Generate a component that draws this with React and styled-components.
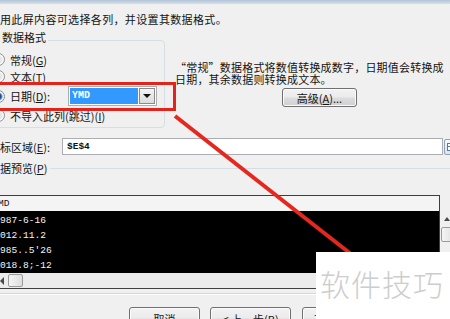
import React from "react";
import styled, { createGlobalStyle } from "styled-components";

const GlobalStyle = createGlobalStyle`
  html, body {
    margin: 0;
    padding: 0;
    background: #f0f0f0;
  }
  body {
    width: 450px;
    height: 319px;
    overflow: hidden;
    font-family: "Noto Sans CJK SC", "Noto Sans", sans-serif;
    font-size: 11px;
    color: #141414;
  }
  u { text-decoration-thickness: 1px; text-underline-offset: 1px; }
`;

const Frame = styled.div`
  position: relative;
  width: 450px;
  height: 319px;
  overflow: hidden;
  background: #f0f0f0;
  display: flex;
  flex-direction: column;
`;

const TitleEdge = styled.div`
  flex: none;
  height: 4px;
  background: linear-gradient(#b2c4d8, #d6e1ec);
`;

const Intro = styled.div`
  padding-top: 8px;
  line-height: 14px;
  white-space: nowrap;
  letter-spacing: 0.35px;
`;

const FormatArea = styled.div`
  display: flex;
  flex: none;
  height: 88px;
  margin-top: 14px;
`;

const GroupBox = styled.div`
  flex: none;
  width: 175px;
  margin-left: -10px;
  box-sizing: border-box;
  border: 1px solid #d5dfe5;
  border-radius: 4px;
`;

const GroupTitle = styled.div`
  width: fit-content;
  margin: -10px 0 0 9px;
  padding: 0 2px;
  line-height: 12px;
  background: #f0f0f0;
`;

const RadioList = styled.div`
  margin-top: 8px;
  display: flex;
  flex-direction: column;
`;

const RadioRow = styled.div`
  display: flex;
  align-items: center;
  height: ${(p) => p.$h || 17}px;
  white-space: nowrap;
`;

const RadioDot = styled.span`
  flex: none;
  width: 13px;
  height: 13px;
  margin: 0 5px 0 1px;
  box-sizing: border-box;
  border-radius: 50%;
  border: 1px solid #8e8f8f;
  background: ${(p) =>
    p.$on
      ? "radial-gradient(circle, #1b4f8a 0 2.5px, #5f9ad6 3.5px, #eaf2fb 4.5px)"
      : "radial-gradient(circle, #e6e6e6 0 3px, #fafafa 5px)"};
`;

const DateLabel = styled.span`
  width: 58px;
  flex: none;
`;

const Combo = styled.div`
  display: flex;
  width: 89px;
  height: 20px;
  box-sizing: border-box;
  border: 1px solid #abadb3;
  background: #fff;
  padding: 1px;
  gap: 1px;
`;

const ComboValue = styled.div`
  flex: 1;
  background: #3399ff;
  color: #fff;
  font-family: "Liberation Mono", monospace;
  font-size: 10px;
  font-weight: bold;
  line-height: 16px;
  padding-left: 2px;
`;

const ComboButton = styled.div`
  flex: none;
  width: 16px;
  box-sizing: border-box;
  border: 1px solid #8a8a8a;
  background: linear-gradient(#f4f4f4, #dcdcdc);
  display: flex;
  align-items: center;
  justify-content: center;
  &::after {
    content: "";
    border-top: 4px solid #111;
    border-left: 4px solid transparent;
    border-right: 4px solid transparent;
  }
`;

const Side = styled.div`
  flex: 1;
  min-width: 0;
  padding-left: 10px;
  padding-top: 22px;
  display: flex;
  flex-direction: column;
`;

const DescLine = styled.div`
  line-height: 11.5px;
  white-space: nowrap;
  letter-spacing: 0.2px;
`;

const WinButton = styled.div`
  flex: none;
  width: ${(p) => p.$w}px;
  height: ${(p) => p.$h || 23}px;
  margin-left: ${(p) => p.$ml || 0}px;
  box-sizing: border-box;
  border: 1px solid #707070;
  border-radius: 3px;
  background: linear-gradient(#f2f2f2 0%, #ebebeb 48%, #dddddd 52%, #cfcfcf 100%);
  box-shadow: inset 0 0 0 1px #fbfbfb;
  display: flex;
  align-items: center;
  justify-content: center;
  white-space: nowrap;
  line-height: 14px;
`;

const AdvRow = styled.div`
  display: flex;
  margin-top: 3px;
`;

const TargetRow = styled.div`
  display: flex;
  align-items: center;
  height: 17px;
  margin-top: 10px;
  white-space: nowrap;
`;

const TargetLabel = styled.span`
  width: 62px;
  flex: none;
`;

const TextField = styled.div`
  flex: none;
  width: 381px;
  height: 17px;
  box-sizing: border-box;
  border: 1px solid #abadb3;
  background: #fff;
  padding-left: 4px;
  font-family: "Liberation Mono", monospace;
  font-size: 9.5px;
  font-weight: bold;
  line-height: 15px;
`;

const RefButton = styled.div`
  flex: none;
  width: 16px;
  height: 16px;
  margin-left: 1px;
  box-sizing: border-box;
  border: 1px solid #8fa2b8;
  border-radius: 2px;
  background: linear-gradient(#f6f8fb, #dde4ec);
  display: flex;
  align-items: center;
  padding-left: 2px;
`;

const PreviewHead = styled.div`
  display: flex;
  align-items: center;
  line-height: 14px;
  margin-top: 6px;
  white-space: nowrap;
`;

const HeadRule = styled.div`
  flex: 1;
  margin-left: 3px;
  border-top: 1px solid #d5dfe5;
`;

const Preview = styled.div`
  display: flex;
  align-items: flex-start;
  margin-top: 20px;
`;

const PreviewMain = styled.div`
  flex: none;
  width: 442px;
  margin-left: -2px;
  box-sizing: border-box;
  border: 1px solid #3f3f3f;
  font-family: "Liberation Mono", monospace;
  font-size: 9.6px;
`;

const ColHeader = styled.div`
  height: 15px;
  line-height: 15px;
  background: #f4f4f4;
  padding-left: 1px;
  text-indent: -2px;
  color: #111;
`;

const DataArea = styled.div`
  height: 62px;
  overflow: hidden;
  background: #000;
  color: #f4f4f4;
  padding: 2px 0 0 1px;
  box-sizing: border-box;
`;

const DataRow = styled.div`
  height: 15px;
  line-height: 15px;
  white-space: pre;
`;

const HScroll = styled.div`
  height: 15px;
  display: flex;
  align-items: center;
  background: #ececec;
`;

const ArrowLeft = styled.span`
  flex: none;
  margin-left: 1px;
  border-right: 4px solid #4a4a4a;
  border-top: 4px solid transparent;
  border-bottom: 4px solid transparent;
`;

const Thumb = styled.span`
  flex: none;
  width: ${(p) => p.$w}px;
  height: ${(p) => p.$h}px;
  margin-left: ${(p) => p.$ml || 0}px;
  margin-top: ${(p) => p.$mt || 0}px;
  box-sizing: border-box;
  border: 1px solid #9b9b9b;
  border-radius: 2px;
  background: linear-gradient(90deg, #f4f4f4, #dedede);
`;

const VScroll = styled.div`
  flex: none;
  width: 17px;
  margin: 17px 0 0 1px;
  display: flex;
  flex-direction: column;
  align-items: flex-start;
`;

const ArrowUp = styled.span`
  margin: 5px 0 0 3px;
  border-bottom: 4px solid #4a4a4a;
  border-left: 3px solid transparent;
  border-right: 3px solid transparent;
`;

const BottomRule = styled.div`
  margin-top: 4px;
  border-top: 1px solid #d5d5d5;
  border-bottom: 1px solid #ffffff;
`;

const ButtonRow = styled.div`
  display: flex;
  margin-top: 12px;
  padding-left: 129px;
`;

const RedBox = styled.div`
  position: absolute;
  left: -4px;
  top: 82px;
  width: 180px;
  height: 29px;
  box-sizing: border-box;
  border: 3px solid #e3241c;
`;

const Annotation = styled.svg`
  position: absolute;
  left: 0;
  top: 0;
  pointer-events: none;
`;

const Watermark = styled.div`
  position: absolute;
  right: 0;
  bottom: 0;
  width: 134px;
  height: 67px;
  box-sizing: border-box;
  background: #fff;
  padding: 16px 0 0 4px;
  font-size: 30px;
  line-height: 30px;
  font-weight: 300;
  letter-spacing: 1px;
  color: #cdcdcd;
  white-space: nowrap;
`;

function Radio({ on, h, children }) {
  return (
    <RadioRow $h={h}>
      <RadioDot $on={on} />
      {children}
    </RadioRow>
  );
}

export default function App() {
  const rows = ["987-6-16", "012.11.2", "985..5'26", "018.8;-12"];
  return (
    <>
      <GlobalStyle />
      <Frame>
        <TitleEdge />
        <Intro>用此屏内容可选择各列，并设置其数据格式。</Intro>

        <FormatArea>
          <GroupBox>
            <GroupTitle>数据格式</GroupTitle>
            <RadioList>
              <Radio>常规(<u>G</u>)</Radio>
              <Radio>文本(<u>T</u>)</Radio>
              <Radio on h={22}>
                <DateLabel>日期(<u>D</u>):</DateLabel>
                <Combo>
                  <ComboValue>YMD</ComboValue>
                  <ComboButton />
                </Combo>
              </Radio>
              <Radio>不导入此列(跳过)(<u>I</u>)</Radio>
            </RadioList>
          </GroupBox>
          <Side>
            <DescLine>“常规”数据格式将数值转换成数字，日期值会转换成</DescLine>
            <DescLine>日期，其余数据则转换成文本。</DescLine>
            <AdvRow>
              <WinButton $w={75} $h={19} $ml={107}>高级(<u>A</u>)...</WinButton>
            </AdvRow>
          </Side>
        </FormatArea>

        <TargetRow>
          <TargetLabel>标区域(<u>E</u>):</TargetLabel>
          <TextField>$E$4</TextField>
          <RefButton>
            <svg width="10" height="10" viewBox="0 0 10 10">
              <rect x="0.5" y="1.5" width="9" height="7" fill="#fff" stroke="#5a7aa0" />
              <line x1="1" y1="4.5" x2="9" y2="4.5" stroke="#5a7aa0" />
            </svg>
          </RefButton>
        </TargetRow>

        <PreviewHead>
          据预览(<u>P</u>)
          <HeadRule />
        </PreviewHead>

        <Preview>
          <PreviewMain>
            <ColHeader>MD</ColHeader>
            <DataArea>
              {rows.map((r) => (
                <DataRow key={r}>{r}</DataRow>
              ))}
            </DataArea>
            <HScroll>
              <ArrowLeft />
              <Thumb $w={15} $h={13} $ml={4} />
            </HScroll>
          </PreviewMain>
          <VScroll>
            <ArrowUp />
            <Thumb $w={16} $h={15} $mt={6} />
          </VScroll>
        </Preview>

        <BottomRule />

        <ButtonRow>
          <WinButton $w={71}>取消</WinButton>
          <WinButton $w={81} $ml={10}>&lt; 上一步(<u>B</u>)</WinButton>
          <WinButton $w={81} $ml={11}>下一步(<u>N</u>) &gt;</WinButton>
        </ButtonRow>

        <RedBox />
        <Annotation width="450" height="319" viewBox="0 0 450 319">
          <line x1="175" y1="116" x2="356" y2="258" stroke="#e5281f" strokeWidth="4" />
        </Annotation>
        <Watermark>软件技巧</Watermark>
      </Frame>
    </>
  );
}
